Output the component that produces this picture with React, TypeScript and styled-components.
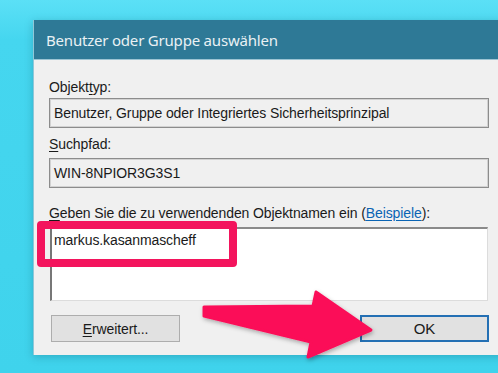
import styled, { createGlobalStyle } from "styled-components";

const GlobalStyle = createGlobalStyle`
  html, body {
    margin: 0;
    padding: 0;
  }
  body {
    width: 498px;
    height: 373px;
    overflow: hidden;
    background: linear-gradient(180deg, #5be0f6 0px, #45d6ef 40px, #3fd3ec 100%);
  }
`;

const Page = styled.div`
  position: relative;
  width: 498px;
  height: 373px;
  padding: 20px 0 0 33px;
  box-sizing: border-box;
  overflow: hidden;
`;

const Dialog = styled.div`
  width: 470px;
  background: #f0f0f0;
  border-left: 1px solid #8fc7d8;
  box-shadow: 0 2px 8px rgba(0, 60, 80, 0.25);
  display: flex;
  flex-direction: column;
`;

const TitleBar = styled.div`
  height: 40px;
  background: #2e7996;
  color: #e9f1f4;
  font-family: "Noto Sans", "Open Sans", sans-serif;
  font-size: 15px;
  letter-spacing: -0.2px;
  display: flex;
  align-items: center;
  padding-left: 12px;
  border-bottom: 1px solid #9cc4d3;
  box-sizing: border-box;
`;

const Body = styled.div`
  display: flex;
  flex-direction: column;
  padding: 19px 14px 13px 15px;
  font-family: "Liberation Sans", Arial, sans-serif;
  font-size: 14px;
  letter-spacing: -0.1px;
  color: #1a1a1a;
`;

const Label = styled.div<{ $top?: number; $gap?: number }>`
  height: 16px;
  line-height: 16px;
  margin-top: ${(p) => p.$top ?? 0}px;
  margin-bottom: ${(p) => p.$gap ?? 3}px;
`;

const Key = styled.span`
  text-decoration: underline;
  text-underline-offset: 2px;
`;

const Link = styled.span`
  color: #0a64b4;
  text-decoration: underline;
  text-underline-offset: 2px;
`;

const Field = styled.div`
  width: 440px;
  height: 30px;
  box-sizing: border-box;
  border: 1px solid #8c8c8c;
  box-shadow: inset 0 0 0 1px #d2d2d2;
  background: #f0f0f0;
  display: flex;
  align-items: center;
  padding-left: 4px;
`;

const InputWrap = styled.div`
  position: relative;
  width: 438px;
  margin-left: 1px;
  margin-top: 6px;
`;

const TextArea = styled.div`
  height: 74px;
  box-sizing: border-box;
  background: #ffffff;
  border-top: 2px solid #8a8a8a;
  border-left: 2px solid #777777;
  border-right: 1px solid #dcdcdc;
  border-bottom: 1px solid #dcdcdc;
  padding: 3px 0 0 2px;
  line-height: 16px;
`;

const Highlight = styled.div`
  position: absolute;
  left: -13px;
  top: -6px;
  width: 200px;
  height: 46px;
  box-sizing: border-box;
  border: 8px solid #f3145d;
  border-radius: 4px;
  pointer-events: none;
`;

const ButtonRow = styled.div`
  display: flex;
  justify-content: space-between;
  width: 438px;
  margin: 14px 0 0 2px;
`;

const Button = styled.div<{ $primary?: boolean }>`
  width: 129px;
  height: 27px;
  box-sizing: border-box;
  background: #e1e1e1;
  border: ${(p) => (p.$primary ? "2px solid #2470b4" : "1px solid #adadad")};
  display: flex;
  align-items: center;
  justify-content: center;
  font-size: ${(p) => (p.$primary ? 15 : 14)}px;
`;

const ArrowLayer = styled.svg`
  position: absolute;
  left: 0;
  top: 0;
  width: 498px;
  height: 373px;
  pointer-events: none;
`;

export default function App() {
  return (
    <>
      <GlobalStyle />
      <Page>
        <Dialog>
          <TitleBar>Benutzer oder Gruppe auswählen</TitleBar>
          <Body>
            <Label>
              Objekt<Key>t</Key>yp:
            </Label>
            <Field>Benutzer, Gruppe oder Integriertes Sicherheitsprinzipal</Field>
            <Label $top={8} $gap={6}>
              <Key>S</Key>uchpfad:
            </Label>
            <Field>WIN-8NPIOR3G3S1</Field>
            <Label $top={17} $gap={0}>
              <Key>G</Key>eben Sie die zu verwendenden Objektnamen ein (
              <Link>Beispiele</Link>):
            </Label>
            <InputWrap>
              <TextArea>markus.kasanmascheff</TextArea>
              <Highlight />
            </InputWrap>
            <ButtonRow>
              <Button>
                <span>
                  <Key>E</Key>rweitert...
                </span>
              </Button>
              <Button $primary>OK</Button>
            </ButtonRow>
          </Body>
        </Dialog>
        <ArrowLayer viewBox="0 0 498 373">
          <defs>
            <filter id="shadow" x="-10%" y="-20%" width="120%" height="150%">
              <feDropShadow dx="1" dy="2" stdDeviation="2" floodColor="#000" floodOpacity="0.3" />
            </filter>
          </defs>
          <polygon
            points="204,307 313,306 316,292 371,330 308,357 311,342 204,316"
            fill="#fb0f58"
            stroke="#fb0f58"
            strokeWidth="3"
            strokeLinejoin="round"
            filter="url(#shadow)"
          />
        </ArrowLayer>
      </Page>
    </>
  );
}
